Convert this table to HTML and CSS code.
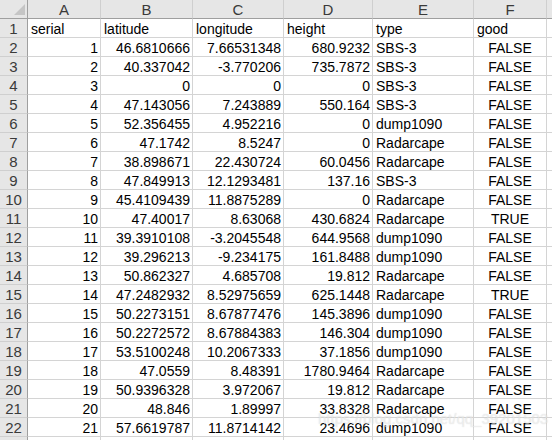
FILE: index.html
```html
<!DOCTYPE html>
<html>
<head>
<meta charset="utf-8">
<link rel="stylesheet" href="styles.css">
</head>
<body>
<div class="sheet">
  <div class="grid">
    <div class="corner"><span class="tri"></span></div>
    <div class="hd">A</div><div class="hd">B</div><div class="hd">C</div><div class="hd">D</div><div class="hd">E</div><div class="hd">F</div><div class="hd"></div>

    <div class="rh">1</div><div class="c t">serial</div><div class="c t">latitude</div><div class="c t">longitude</div><div class="c t">height</div><div class="c t">type</div><div class="c t">good</div><div class="c"></div>
    <div class="rh">2</div><div class="c n">1</div><div class="c n">46.6810666</div><div class="c n">7.66531348</div><div class="c n">680.9232</div><div class="c t">SBS-3</div><div class="c b">FALSE</div><div class="c"></div>
    <div class="rh">3</div><div class="c n">2</div><div class="c n">40.337042</div><div class="c n">-3.770206</div><div class="c n">735.7872</div><div class="c t">SBS-3</div><div class="c b">FALSE</div><div class="c"></div>
    <div class="rh">4</div><div class="c n">3</div><div class="c n">0</div><div class="c n">0</div><div class="c n">0</div><div class="c t">SBS-3</div><div class="c b">FALSE</div><div class="c"></div>
    <div class="rh">5</div><div class="c n">4</div><div class="c n">47.143056</div><div class="c n">7.243889</div><div class="c n">550.164</div><div class="c t">SBS-3</div><div class="c b">FALSE</div><div class="c"></div>
    <div class="rh">6</div><div class="c n">5</div><div class="c n">52.356455</div><div class="c n">4.952216</div><div class="c n">0</div><div class="c t">dump1090</div><div class="c b">FALSE</div><div class="c"></div>
    <div class="rh">7</div><div class="c n">6</div><div class="c n">47.1742</div><div class="c n">8.5247</div><div class="c n">0</div><div class="c t">Radarcape</div><div class="c b">FALSE</div><div class="c"></div>
    <div class="rh">8</div><div class="c n">7</div><div class="c n">38.898671</div><div class="c n">22.430724</div><div class="c n">60.0456</div><div class="c t">Radarcape</div><div class="c b">FALSE</div><div class="c"></div>
    <div class="rh">9</div><div class="c n">8</div><div class="c n">47.849913</div><div class="c n">12.1293481</div><div class="c n">137.16</div><div class="c t">SBS-3</div><div class="c b">FALSE</div><div class="c"></div>
    <div class="rh">10</div><div class="c n">9</div><div class="c n">45.4109439</div><div class="c n">11.8875289</div><div class="c n">0</div><div class="c t">Radarcape</div><div class="c b">FALSE</div><div class="c"></div>
    <div class="rh">11</div><div class="c n">10</div><div class="c n">47.40017</div><div class="c n">8.63068</div><div class="c n">430.6824</div><div class="c t">Radarcape</div><div class="c b">TRUE</div><div class="c"></div>
    <div class="rh">12</div><div class="c n">11</div><div class="c n">39.3910108</div><div class="c n">-3.2045548</div><div class="c n">644.9568</div><div class="c t">dump1090</div><div class="c b">FALSE</div><div class="c"></div>
    <div class="rh">13</div><div class="c n">12</div><div class="c n">39.296213</div><div class="c n">-9.234175</div><div class="c n">161.8488</div><div class="c t">dump1090</div><div class="c b">FALSE</div><div class="c"></div>
    <div class="rh">14</div><div class="c n">13</div><div class="c n">50.862327</div><div class="c n">4.685708</div><div class="c n">19.812</div><div class="c t">Radarcape</div><div class="c b">FALSE</div><div class="c"></div>
    <div class="rh">15</div><div class="c n">14</div><div class="c n">47.2482932</div><div class="c n">8.52975659</div><div class="c n">625.1448</div><div class="c t">Radarcape</div><div class="c b">TRUE</div><div class="c"></div>
    <div class="rh">16</div><div class="c n">15</div><div class="c n">50.2273151</div><div class="c n">8.67877476</div><div class="c n">145.3896</div><div class="c t">dump1090</div><div class="c b">FALSE</div><div class="c"></div>
    <div class="rh">17</div><div class="c n">16</div><div class="c n">50.2272572</div><div class="c n">8.67884383</div><div class="c n">146.304</div><div class="c t">dump1090</div><div class="c b">FALSE</div><div class="c"></div>
    <div class="rh">18</div><div class="c n">17</div><div class="c n">53.5100248</div><div class="c n">10.2067333</div><div class="c n">37.1856</div><div class="c t">dump1090</div><div class="c b">FALSE</div><div class="c"></div>
    <div class="rh">19</div><div class="c n">18</div><div class="c n">47.0559</div><div class="c n">8.48391</div><div class="c n">1780.9464</div><div class="c t">Radarcape</div><div class="c b">FALSE</div><div class="c"></div>
    <div class="rh">20</div><div class="c n">19</div><div class="c n">50.9396328</div><div class="c n">3.972067</div><div class="c n">19.812</div><div class="c t">Radarcape</div><div class="c b">FALSE</div><div class="c"></div>
    <div class="rh">21</div><div class="c n">20</div><div class="c n">48.846</div><div class="c n">1.89997</div><div class="c n">33.8328</div><div class="c t">Radarcape</div><div class="c b">FALSE</div><div class="c"></div>
    <div class="rh">22</div><div class="c n">21</div><div class="c n">57.6619787</div><div class="c n">11.8714142</div><div class="c n">23.4696</div><div class="c t">dump1090</div><div class="c b">FALSE</div><div class="c"></div>
    <div class="rh"></div><div class="c"></div><div class="c"></div><div class="c"></div><div class="c"></div><div class="c"></div><div class="c"></div><div class="c"></div>
  </div>
  <div class="watermark">https://blog.csdn.net/qq_39201503</div>
</div>
</body>
</html>
```

FILE: styles.css
```css
html, body {
  margin: 0;
  padding: 0;
  background: #ffffff;
  overflow: hidden;
}

.sheet {
  position: relative;
  width: 552px;
  height: 440px;
  overflow: hidden;
  font-family: "Liberation Sans", Arial, sans-serif;
  font-size: 14px;
  color: #000;
}

.grid {
  display: grid;
  grid-template-columns: 28px 73px 92px 91px 89px 101px 73px 40px;
  grid-auto-rows: 19px;
}

.grid > div {
  box-sizing: border-box;
  border-right: 1px solid #d4d4d4;
  border-bottom: 1px solid #d4d4d4;
  white-space: nowrap;
  overflow: hidden;
  display: flex;
  align-items: flex-end;
  line-height: 16px;
}

.corner {
  background: #e6e6e6;
  position: relative;
  border-bottom-color: #9f9f9f !important;
  border-right-color: #9f9f9f !important;
}

.tri {
  position: absolute;
  right: 2px;
  bottom: 3px;
  width: 0;
  height: 0;
  border-left: 11px solid transparent;
  border-bottom: 11px solid #c5c5c5;
}

.hd {
  background: #e6e6e6;
  justify-content: center;
  color: #3a3a3a;
  font-size: 15px;
  border-right-color: #cfcfcf !important;
  border-bottom-color: #9f9f9f !important;
}

.rh {
  background: #e6e6e6;
  justify-content: center;
  color: #3a3a3a;
  font-size: 15px;
  border-right-color: #9f9f9f !important;
  border-bottom-color: #cfcfcf !important;
}

.t {
  justify-content: flex-start;
  padding-left: 3px;
}

.n {
  justify-content: flex-end;
  padding-right: 2px;
}

.b {
  justify-content: center;
}

.watermark {
  position: absolute;
  left: 318px;
  top: 410px;
  font-size: 15px;
  color: rgba(255, 255, 255, 0.5);
  text-shadow: 0 0 1px rgba(120, 120, 120, 0.3);
  pointer-events: none;
}
```
